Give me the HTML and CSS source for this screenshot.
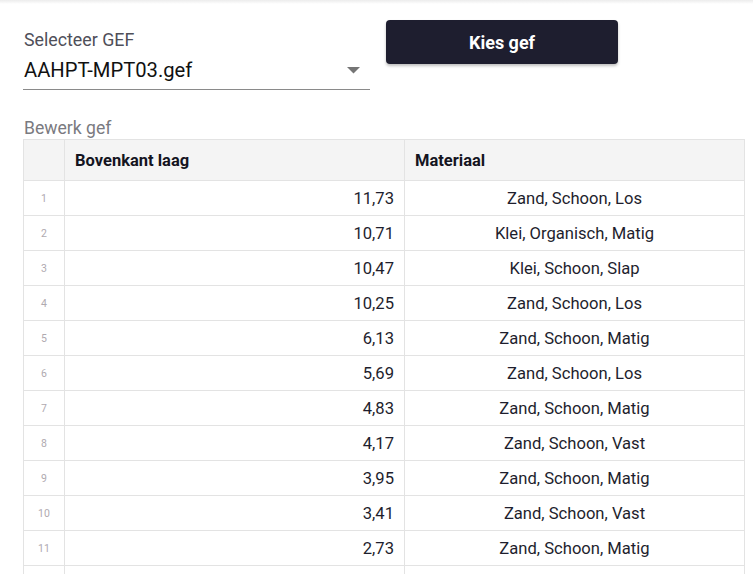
FILE: index.html
```html
<!DOCTYPE html>
<html lang="nl">
<head>
<meta charset="utf-8">
<title>Bewerk gef</title>
<link rel="stylesheet" href="styles.css">
</head>
<body>
<div class="shade"></div>
<main class="page">
  <div class="top-row">
    <div class="field">
      <div class="field-label">Selecteer GEF</div>
      <div class="select">
        <span class="select-value">AAHPT-MPT03.gef</span>
        <svg class="arrow" width="14" height="7" viewBox="0 0 14 7"><path d="M0 0 H13 L6.5 6.5 Z" fill="#757575"/></svg>
      </div>
    </div>
    <button class="btn" type="button">Kies gef</button>
  </div>
  <div class="section-label">Bewerk gef</div>
  <table class="grid">
    <colgroup><col class="c-num"><col class="c-a"><col class="c-b"></colgroup>
    <thead>
      <tr><th></th><th>Bovenkant laag</th><th>Materiaal</th></tr>
    </thead>
    <tbody>
      <tr><td class="num">1</td><td class="val">11,73</td><td class="mat">Zand, Schoon, Los</td></tr>
      <tr><td class="num">2</td><td class="val">10,71</td><td class="mat">Klei, Organisch, Matig</td></tr>
      <tr><td class="num">3</td><td class="val">10,47</td><td class="mat">Klei, Schoon, Slap</td></tr>
      <tr><td class="num">4</td><td class="val">10,25</td><td class="mat">Zand, Schoon, Los</td></tr>
      <tr><td class="num">5</td><td class="val">6,13</td><td class="mat">Zand, Schoon, Matig</td></tr>
      <tr><td class="num">6</td><td class="val">5,69</td><td class="mat">Zand, Schoon, Los</td></tr>
      <tr><td class="num">7</td><td class="val">4,83</td><td class="mat">Zand, Schoon, Matig</td></tr>
      <tr><td class="num">8</td><td class="val">4,17</td><td class="mat">Zand, Schoon, Vast</td></tr>
      <tr><td class="num">9</td><td class="val">3,95</td><td class="mat">Zand, Schoon, Matig</td></tr>
      <tr><td class="num">10</td><td class="val">3,41</td><td class="mat">Zand, Schoon, Vast</td></tr>
      <tr><td class="num">11</td><td class="val">2,73</td><td class="mat">Zand, Schoon, Matig</td></tr>
      <tr><td class="num"></td><td class="val"></td><td class="mat"></td></tr>
    </tbody>
  </table>
</main>
</body>
</html>
```
FILE: styles.css
```css
html, body {
  margin: 0;
  padding: 0;
  background: #ffffff;
  overflow: hidden;
  height: 100%;
}
body {
  font-family: Roboto, "Liberation Sans", Arial, sans-serif;
  color: #1e1e2d;
}
.shade {
  height: 4px;
  background: linear-gradient(#ececec, #ffffff);
}
.page {
  padding-left: 23px;
}
.top-row {
  display: flex;
  align-items: flex-start;
}
.field {
  width: 347px;
  margin-top: 26px;
}
.field-label {
  font-size: 17.8px;
  line-height: 20px;
  height: 20px;
  color: #4f4f59;
  padding-left: 1px;
}
.select {
  display: flex;
  align-items: center;
  justify-content: space-between;
  padding: 6px 9px 5px 1px;
  border-bottom: 1px solid #8a8a8a;
}
.select-value {
  font-size: 20.2px;
  line-height: 28px;
  color: #111;
}
.arrow {
  display: block;
}
.btn {
  margin-left: 16px;
  margin-top: 16px;
  width: 232px;
  height: 44px;
  border: 0;
  border-radius: 4px;
  background: #1e1e2f;
  color: #ffffff;
  font-family: Roboto, "Liberation Sans", Arial, sans-serif;
  font-weight: 700;
  font-size: 18px;
  box-shadow: 0 2px 3px rgba(0, 0, 0, 0.25);
}
.section-label {
  margin-top: 28px;
  font-size: 17.6px;
  line-height: 20px;
  height: 20px;
  color: #7a7a80;
  padding-left: 1px;
}
.grid {
  margin-top: 1px;
  width: 721px;
  table-layout: fixed;
  border-collapse: collapse;
}
.c-num { width: 41px; }
.c-a { width: 340px; }
.c-b { width: 340px; }
.grid th, .grid td {
  border: 1px solid #e3e3e3;
  padding: 0 10px;
  white-space: nowrap;
}
.grid th {
  height: 40px;
  background: #f4f4f4;
  text-align: left;
  font-weight: 700;
  font-size: 16.5px;
  color: #14141f;
}
.grid td {
  height: 34px;
  font-size: 16.6px;
  color: #1e1e2d;
}
.grid td.num {
  padding: 0;
  text-align: center;
  font-size: 10.5px;
  color: #b0aab0;
}
.grid td.val {
  text-align: right;
}
.grid td.mat {
  text-align: center;
}
```
